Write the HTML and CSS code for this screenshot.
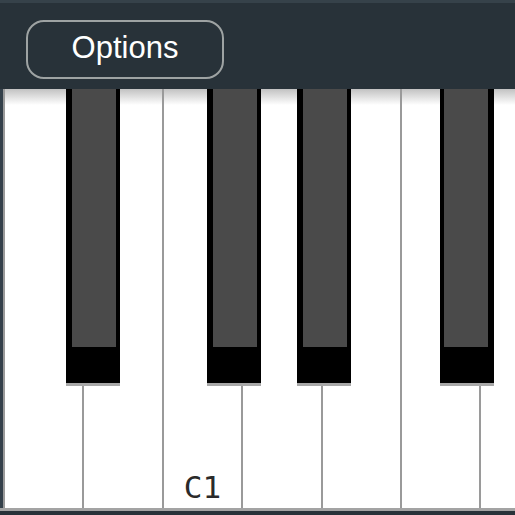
FILE: index.html
```html
<!DOCTYPE html>
<html lang="en">
<head>
    <meta charset="UTF-8">
    <meta name="viewport" content="width=device-width, initial-scale=1.0">
    <title>Piano</title>
    <link rel="stylesheet" href="styles.css">
</head>
<body>
    <div class="toolbar">
        <button class="options-btn">Options</button>
    </div>
    <div class="piano">
        <div class="white-key"></div>
        <div class="white-key"></div>
        <div class="white-key"><span class="label">C1</span></div>
        <div class="white-key"></div>
        <div class="white-key"></div>
        <div class="white-key"></div>
        <div class="white-key"></div>

        <div class="black-key key-as"><div class="face"></div></div>
        <div class="black-key key-cs"><div class="face"></div></div>
        <div class="black-key key-ds"><div class="face"></div></div>
        <div class="black-key key-fs flip"><div class="face"></div></div>
    </div>
</body>
</html>
```

FILE: styles.css
```css
body {
    margin: 0;
    background-color: #283239;
    overflow: hidden;
    width: 515px;
    height: 515px;
}
.toolbar {
    height: 89px;
    box-sizing: border-box;
    border-top: 3px solid #36424a;
    padding: 17px 0 0 26px;
    display: flex;
    align-items: flex-start;
}
.options-btn {
    width: 198px;
    height: 59px;
    background: transparent;
    border: 2px solid #9ea3a3;
    border-radius: 18px;
    color: #fff;
    font-family: "Liberation Sans", Arial, sans-serif;
    font-size: 31px;
    padding: 0 0 3px;
}
.piano {
    position: relative;
    display: flex;
    height: 419px;
    padding-left: 3px;
    background-color: #34404a;
    border-bottom: 3px solid #a3a3a3;
    overflow: hidden;
}
.white-key {
    flex: 0 0 79.4px;
    box-sizing: border-box;
    border-left: 2px solid #9a9a9a;
    background: linear-gradient(to bottom, #c2c2c2, #ffffff 16px);
    display: flex;
    align-items: flex-end;
    justify-content: center;
}
.label {
    font-family: "DejaVu Sans Mono", monospace;
    font-size: 31px;
    color: #2a2a2a;
    padding-bottom: 3px;
}
.black-key {
    position: absolute;
    top: 0;
    width: 54px;
    height: 294px;
    box-sizing: border-box;
    background-color: #000;
    padding: 0 4px 36px 6px;
    box-shadow: 0 3px 0 #a8a8a8;
}
.black-key.flip {
    padding: 0 6px 36px 4px;
}
.face {
    height: 100%;
    background-color: #4a4a4a;
}
.key-as { left: 66px; }
.key-cs { left: 207px; }
.key-ds { left: 297px; }
.key-fs { left: 440px; }
```
